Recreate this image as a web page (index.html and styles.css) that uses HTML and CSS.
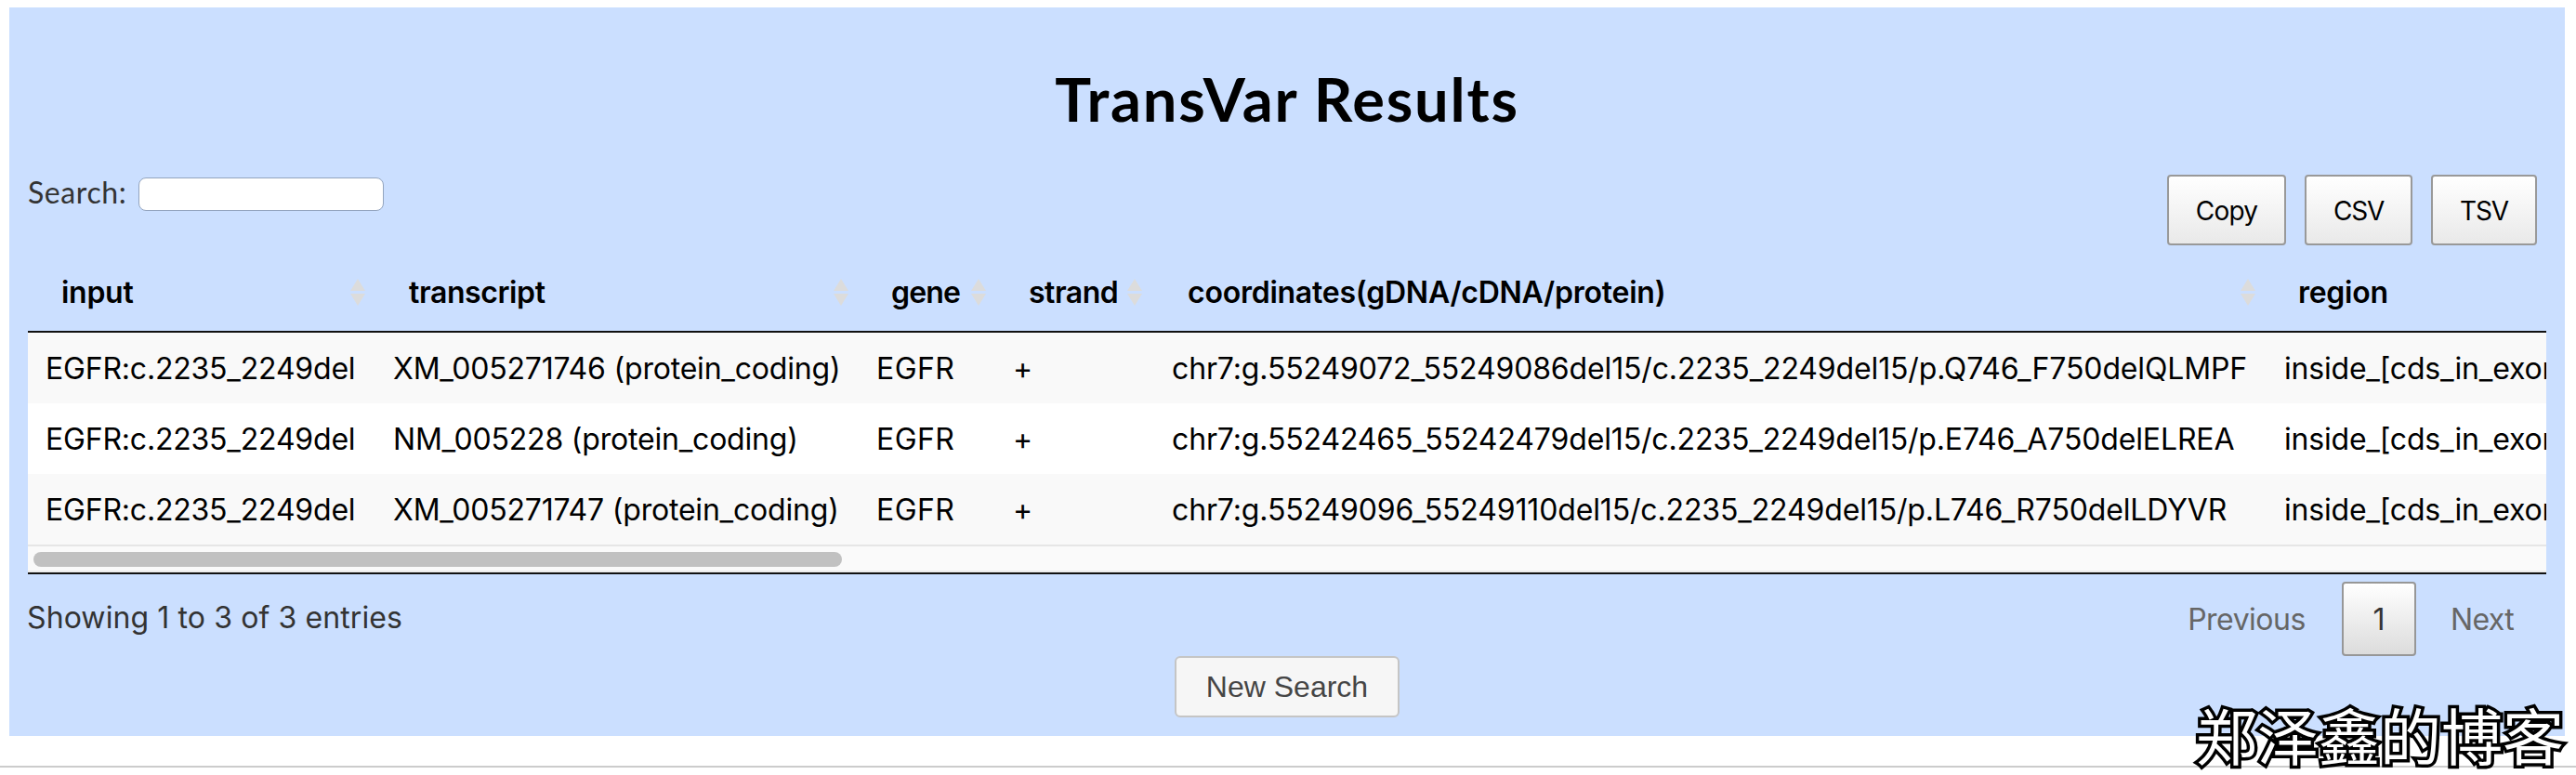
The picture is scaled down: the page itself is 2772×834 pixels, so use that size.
FILE: index.html
```html
<!DOCTYPE html>
<html lang="en">
<head>
<meta charset="utf-8">
<title>TransVar Results</title>
<link rel="stylesheet" href="styles.css">
</head>
<body>
<main class="panel">
  <h1 class="title">TransVar Results</h1>

  <div class="toolbar">
    <label class="search"><span class="search-label">Search:</span><input class="search-input" type="text"></label>
    <div class="exports">
      <button class="export copy">Copy</button>
      <button class="export csv">CSV</button>
      <button class="export tsv">TSV</button>
    </div>
  </div>

  <div class="table-wrap">
    <table class="results">
      <colgroup><col class="c-input"><col class="c-transcript"><col class="c-gene"><col class="c-strand"><col class="c-coord"><col class="c-region"></colgroup>
      <thead>
        <tr>
          <th><div class="head"><span>input</span><svg class="sort" viewBox="0 0 16 30"><path d="M8 0L16 13H0zM0 16H16L8 29z"/></svg></div></th>
          <th class="th-transcript"><div class="head"><span>transcript</span><svg class="sort" viewBox="0 0 16 30"><path d="M8 0L16 13H0zM0 16H16L8 29z"/></svg></div></th>
          <th class="th-gene"><div class="head"><span>gene</span><svg class="sort" viewBox="0 0 16 30"><path d="M8 0L16 13H0zM0 16H16L8 29z"/></svg></div></th>
          <th class="th-strand"><div class="head"><span>strand</span><svg class="sort" viewBox="0 0 16 30"><path d="M8 0L16 13H0zM0 16H16L8 29z"/></svg></div></th>
          <th class="th-coord"><div class="head"><span>coordinates(gDNA/cDNA/protein)</span><svg class="sort" viewBox="0 0 16 30"><path d="M8 0L16 13H0zM0 16H16L8 29z"/></svg></div></th>
          <th class="th-region"><div class="head"><span>region</span></div></th>
        </tr>
      </thead>
      <tbody>
        <tr><td>EGFR:c.2235_2249del</td><td class="transcript">XM_005271746 (protein_coding)</td><td class="gene">EGFR</td><td class="strand">+</td><td class="coord">chr7:g.55249072_55249086del15/c.2235_2249del15/p.Q746_F750delQLMPF</td><td class="region">inside_[cds_in_exon</td></tr>
        <tr><td>EGFR:c.2235_2249del</td><td class="transcript">NM_005228 (protein_coding)</td><td class="gene">EGFR</td><td class="strand">+</td><td class="coord">chr7:g.55242465_55242479del15/c.2235_2249del15/p.E746_A750delELREA</td><td class="region">inside_[cds_in_exon</td></tr>
        <tr><td>EGFR:c.2235_2249del</td><td class="transcript">XM_005271747 (protein_coding)</td><td class="gene">EGFR</td><td class="strand">+</td><td class="coord">chr7:g.55249096_55249110del15/c.2235_2249del15/p.L746_R750delLDYVR</td><td class="region">inside_[cds_in_exon</td></tr>
      </tbody>
    </table>
    <div class="scrollbar"><div class="thumb"></div></div>
  </div>

  <div class="footer">
    <div class="info">Showing 1 to 3 of 3 entries</div>
    <nav class="pager">
      <a class="page prev">Previous</a>
      <a class="page current">1</a>
      <a class="page next">Next</a>
    </nav>
  </div>

  <div class="actions"><button class="new-search">New Search</button></div>
</main>
<hr class="rule">
<div class="watermark" lang="zh-CN">郑泽鑫的博客</div>
</body>
</html>
```
FILE: styles.css
```css
* { box-sizing: border-box; }

body {
  margin: 0;
  padding: 8px 12px 0 10px;
  height: 834px;
  overflow: hidden;
  background: #fff;
  color: #000;
  font: 32px/36px Inter, "Liberation Sans", sans-serif;
  position: relative;
}

.panel {
  height: 784px;
  padding: 0 20px;
  background: #cbdfff;
}

.title {
  margin: 0;
  padding-top: 62px;
  height: 180px;
  font: 700 65px/72px Lato, "Open Sans", sans-serif;
  letter-spacing: 1.8px;
  text-align: center;
}

.toolbar {
  display: flex;
  justify-content: space-between;
  height: 76px;
}

.search {
  display: flex;
  align-items: flex-start;
  padding-top: 3px;
}
.search-label {
  width: 119px;
  color: #333;
  font: 32px/32px Lato, "Open Sans", sans-serif;
  letter-spacing: 0.6px;
}
.search-input {
  width: 264px;
  height: 36px;
  border: 1px solid #93a4be;
  border-radius: 8px;
  background: #fff;
}

.exports {
  display: flex;
  gap: 20px;
  margin-right: 10px;
}
.export {
  height: 76px;
  padding: 2px 0 0;
  border: 2px solid #999;
  border-radius: 4px;
  background: linear-gradient(#fff, #e9e9e9);
  color: #000;
  font: 28px/34px Inter, sans-serif;
  letter-spacing: -0.8px;
}
.copy { width: 128px; }
.csv { width: 116px; letter-spacing: -1.2px; }
.tsv { width: 114px; letter-spacing: -1.2px; }

.table-wrap {
  width: 2710px;
  overflow: hidden;
  border-bottom: 2px solid #111;
  white-space: nowrap;
}
.results {
  width: 2710px;
  border-collapse: separate;
  border-spacing: 0;
  table-layout: fixed;
  letter-spacing: -0.2px;
}
.c-input { width: 373px; }
.c-transcript { width: 522px; }
.c-gene { width: 148px; }
.c-strand { width: 168px; }
.c-coord { width: 1198px; }
.c-region { width: 301px; }

.results th {
  height: 94px;
  padding: 10px 12px 0 36px;
  border-bottom: 2px solid #111;
  font-weight: 600;
  text-align: left;
  letter-spacing: -0.28px;
}
.results th:first-child { padding-right: 10px; }
.results .th-transcript { padding-left: 37px; letter-spacing: -0.4px; }
.results .th-gene { padding-left: 34px; letter-spacing: -0.8px; }
.results .th-strand { padding-left: 34px; letter-spacing: -0.5px; }
.results .th-coord { padding-left: 37px; letter-spacing: -0.24px; }
.results .th-region { padding-left: 34px; }
.head {
  display: flex;
  align-items: center;
  justify-content: space-between;
}
.sort {
  flex: none;
  width: 16px;
  height: 30px;
  fill: #dcdcdc;
}

.results td {
  height: 76px;
  padding: 1px 0 0 19px;
  background: #f9f9f9;
}
.results tr:nth-child(even) td { background: #fff; }
.results .transcript { padding-left: 20px; }
.results .gene { padding-left: 18px; letter-spacing: 0.4px; }
.results .strand { padding-left: 17px; }
.results .coord { padding-left: 20px; letter-spacing: -0.14px; }

.scrollbar {
  height: 30px;
  padding: 6px 6px;
  border-top: 2px solid #e6e6e6;
  border-bottom: 2px solid #ededed;
  background: #fafafa;
}
.thumb {
  width: 870px;
  height: 16px;
  border-radius: 8px;
  background: #c1c1c1;
}

.footer {
  display: flex;
  justify-content: space-between;
  height: 88px;
  padding-top: 8px;
}
.info {
  padding-top: 21px;
  margin-left: -1px;
  color: #333;
  letter-spacing: 0.1px;
}
.pager {
  display: flex;
  color: #666;
}
.page {
  height: 80px;
  border: 2px solid transparent;
  line-height: 78px;
  text-align: center;
}
.prev { width: 165px; margin-right: 20px; letter-spacing: -0.5px; }
.next { width: 106px; margin: 0 16px 0 18px; letter-spacing: -0.6px; }
.current {
  width: 80px;
  border: 2px solid #979797;
  border-radius: 4px;
  background: linear-gradient(#fff, #dcdcdc);
  color: #333;
}

.actions {
  display: flex;
  justify-content: center;
}
.new-search {
  width: 242px;
  height: 66px;
  padding: 0;
  border: 2px solid #c5c5c5;
  border-radius: 6px;
  background: #f6f6f6;
  color: #454545;
  font: 32px/36px "Liberation Sans", Arial, sans-serif;
}

.rule {
  height: 2px;
  margin: 32px -12px 0 -10px;
  border: 0;
  background: #ccc;
}

.watermark {
  position: absolute;
  right: 13px;
  bottom: 9px;
  color: #fff;
  font: 66px/72px "Noto Sans CJK SC", sans-serif;
  -webkit-text-stroke: 7px #000;
  stroke-linejoin: round;
  paint-order: stroke fill;
  white-space: nowrap;
}
```
